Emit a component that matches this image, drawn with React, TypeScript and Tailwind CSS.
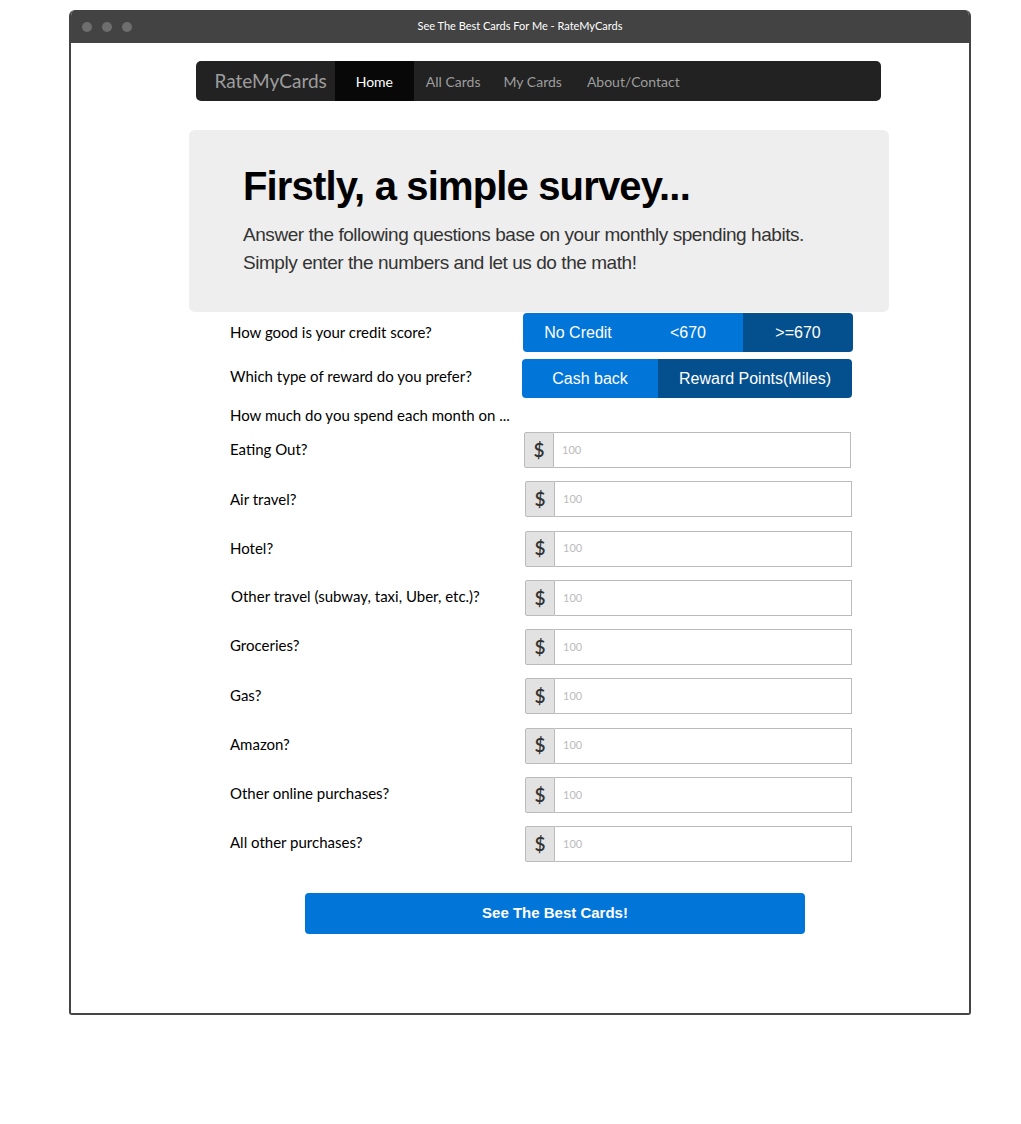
import React, { useState } from "react";

const sans = "font-['Source_Sans_Pro','Lato','Noto_Sans',sans-serif]";

const spendItems = [
  "Eating Out?",
  "Air travel?",
  "Hotel?",
  "Other travel (subway, taxi, Uber, etc.)?",
  "Groceries?",
  "Gas?",
  "Amazon?",
  "Other online purchases?",
  "All other purchases?",
];

function Segmented({
  options,
  active,
  widths,
  onPick,
}: {
  options: string[];
  active: number;
  widths: string[];
  onPick: (i: number) => void;
}) {
  return (
    <div className="flex h-[39px] overflow-hidden rounded-[4px] font-['Liberation_Sans',Arial,sans-serif] text-[16px] text-white">
      {options.map((o, i) => (
        <button
          key={o}
          onClick={() => onPick(i)}
          className={`${widths[i]} flex items-center justify-center ${
            i === active ? "bg-[#044f8e]" : "bg-[#0275d8]"
          }`}
        >
          {o}
        </button>
      ))}
    </div>
  );
}

export default function App() {
  const [credit, setCredit] = useState(2);
  const [reward, setReward] = useState(1);

  return (
    <div className="h-[1124px] w-[1021px] bg-white pt-[10px] pl-[69px]">
      <div className="flex h-[1005px] w-[902px] flex-col overflow-hidden rounded-t-[6px] rounded-b-[3px] border-2 border-[#444] border-t-0">
        <div className="relative flex h-[33px] items-center bg-[#434343] pl-[11px]">
          <div className="flex gap-[10px]">
            <span className="h-[10px] w-[10px] rounded-full bg-[#6e6e6e]" />
            <span className="h-[10px] w-[10px] rounded-full bg-[#6e6e6e]" />
            <span className="h-[10px] w-[10px] rounded-full bg-[#6e6e6e]" />
          </div>
          <div className={`absolute inset-0 flex items-center justify-center text-[11px] text-white ${sans}`}>
            See The Best Cards For Me - RateMyCards
          </div>
        </div>

        <div className="flex flex-1 flex-col items-center bg-white pl-[38px]">
          <nav className={`mt-[18px] ml-[-2px] flex h-[40px] w-[685px] items-stretch rounded-[5px] bg-[#222] ${sans}`}>
            <span className="flex items-center pl-[19px] pr-[8px] text-[19px] text-[#9d9d9d]">RateMyCards</span>
            <a className="flex w-[79px] items-center justify-center bg-[#080808] text-[14px] text-white">Home</a>
            <a className="flex items-center pl-[12px] pr-[11px] text-[14px] text-[#9d9d9d]">All Cards</a>
            <a className="flex items-center px-[12px] text-[14px] text-[#9d9d9d]">My Cards</a>
            <a className="flex items-center px-[13px] text-[14px] text-[#9d9d9d]">About/Contact</a>
          </nav>

          <div className="mt-[29px] h-[182px] w-[700px] rounded-[6px] bg-[#eee] px-[54px] pt-[33px] font-['Liberation_Sans',Arial,sans-serif]">
            <h1 className="text-[40px] leading-[46px] font-bold tracking-[-0.85px] text-black">Firstly, a simple survey...</h1>
            <p className="mt-[12px] text-[19px] leading-[28px] tracking-[-0.45px] text-[#333]">
              Answer the following questions base on your monthly spending habits.
              <br />
              Simply enter the numbers and let us do the math!
            </p>
          </div>

          <div className={`ml-[5px] flex w-[623px] flex-col text-[15px] text-black ${sans}`}>
            <div className="mt-[1px] flex items-center justify-between">
              <span>How good is your credit score?</span>
              <Segmented
                options={["No Credit", "<670", ">=670"]}
                active={credit}
                widths={["w-[110px]", "w-[110px]", "w-[110px]"]}
                onPick={setCredit}
              />
            </div>
            <div className="mt-[7px] flex items-center justify-between">
              <span className="-mt-[4px]">Which type of reward do you prefer?</span>
              <div className="mr-[1px]">
                <Segmented
                  options={["Cash back", "Reward Points(Miles)"]}
                  active={reward}
                  widths={["w-[136px]", "w-[194px]"]}
                  onPick={setReward}
                />
              </div>
            </div>
            <div className="mt-[6px] leading-[22px]">How much do you spend each month on ...</div>

            <div className="mt-[6px] flex flex-col gap-[13.25px]">
              {spendItems.map((label, i) => (
                <div key={label} className="flex items-center justify-between">
                  <span className={`${i < 3 ? "-mt-[1px]" : "-mt-[3px]"} ${i === 3 ? "pl-[1px]" : ""}`}>{label}</span>
                  <div className={`flex h-[36px] w-[327px] ${i === 0 ? "mr-[2px]" : "mr-[1px]"}`}>
                    <span className="flex w-[30px] items-center justify-center rounded-l-[2px] border border-[#bbb] bg-[#e2e2e2] text-[19px] font-semibold text-[#333]">
                      $
                    </span>
                    <input
                      placeholder="100"
                      className="w-[297px] border border-l-0 border-[#bbb] bg-white pl-[8px] text-[11px] text-[#333] placeholder:text-[#bbb] outline-none"
                    />
                  </div>
                </div>
              ))}
            </div>
          </div>

          <button className="mt-[31px] ml-[32px] h-[41px] w-[500px] rounded-[4px] bg-[#0275d8] font-['Liberation_Sans',Arial,sans-serif] text-[15px] font-bold text-white">
            See The Best Cards!
          </button>
        </div>
      </div>
    </div>
  );
}
